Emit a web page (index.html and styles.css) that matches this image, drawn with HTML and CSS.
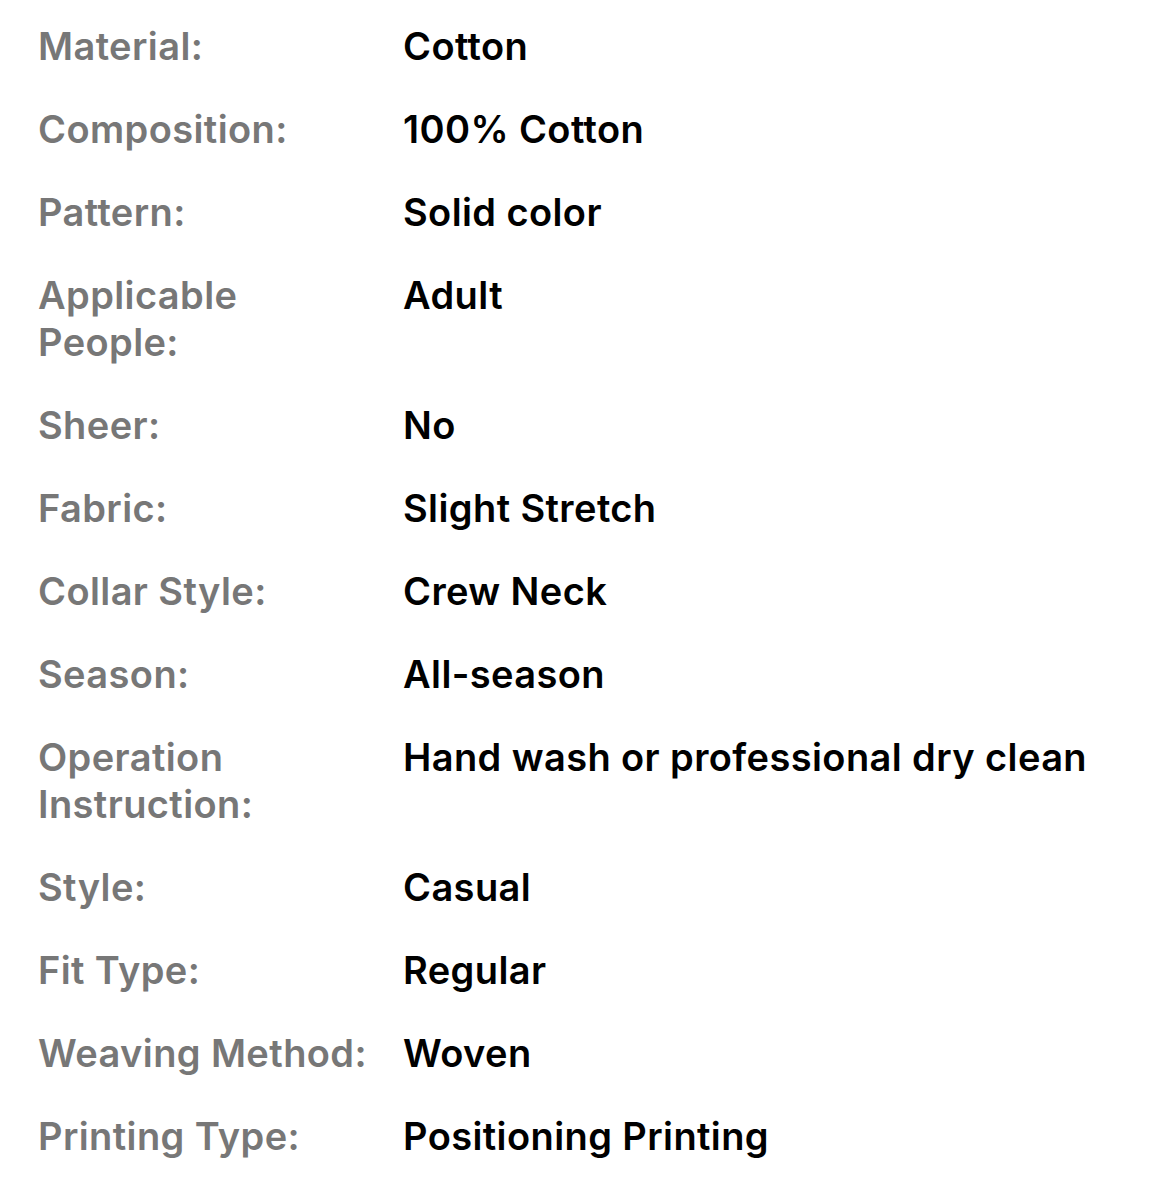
FILE: index.html
```html
<!DOCTYPE html>
<html>
<head>
<meta charset="utf-8">
<link rel="stylesheet" href="styles.css">
</head>
<body>
<dl class="specs">
  <dt>Material:</dt><dd>Cotton</dd>
  <dt>Composition:</dt><dd>100% Cotton</dd>
  <dt>Pattern:</dt><dd>Solid color</dd>
  <dt>Applicable People:</dt><dd>Adult</dd>
  <dt>Sheer:</dt><dd>No</dd>
  <dt>Fabric:</dt><dd>Slight Stretch</dd>
  <dt>Collar Style:</dt><dd>Crew Neck</dd>
  <dt>Season:</dt><dd>All-season</dd>
  <dt>Operation Instruction:</dt><dd>Hand wash or professional dry clean</dd>
  <dt>Style:</dt><dd>Casual</dd>
  <dt>Fit Type:</dt><dd>Regular</dd>
  <dt>Weaving Method:</dt><dd>Woven</dd>
  <dt>Printing Type:</dt><dd>Positioning Printing</dd>
</dl>
</body>
</html>
```

FILE: styles.css
```css
html, body {
  margin: 0;
  padding: 0;
  background: #ffffff;
}
body {
  font-family: Inter, "Noto Sans", sans-serif;
  font-size: 38px;
  line-height: 47px;
  font-weight: 600;
  letter-spacing: 0.4px;
}
.specs {
  margin: 0;
  padding: 23px 20px 0 38px;
  display: grid;
  grid-template-columns: 365px 1fr;
  row-gap: 36px;
}
.specs dt {
  color: #777777;
  margin: 0;
  padding-right: 28px;
}
.specs dd {
  color: #000000;
  margin: 0;
}
```
